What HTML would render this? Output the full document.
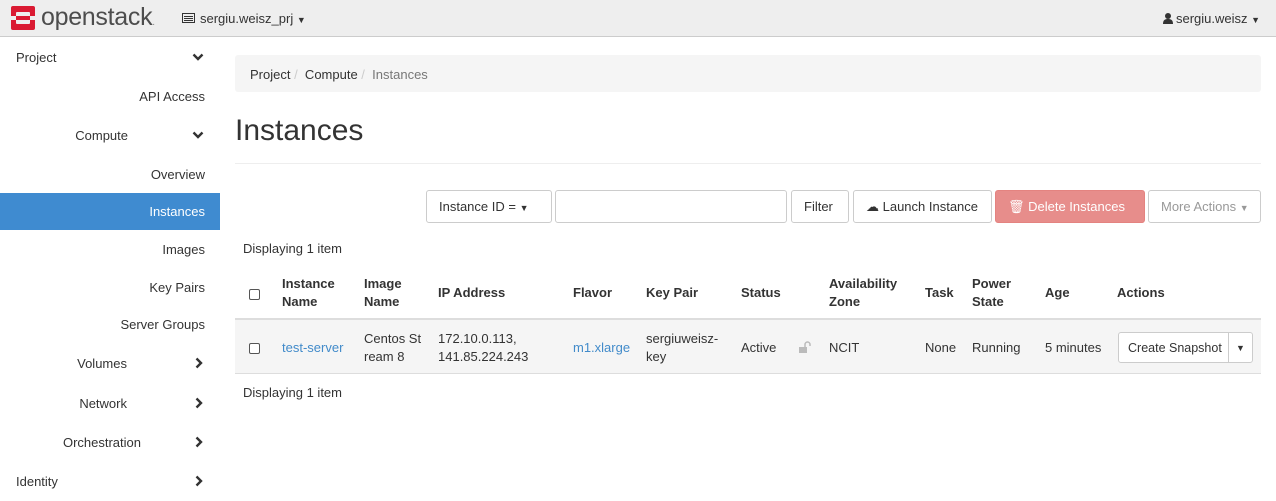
<!DOCTYPE html>
<html><head><meta charset="utf-8"><style>
*{box-sizing:border-box}
body{margin:0;width:1276px;height:493px;overflow:hidden;font-family:"Liberation Sans",sans-serif;font-size:13px;color:#333;background:#fff;position:relative}
.hdr{position:absolute;left:0;top:0;width:1276px;height:37px;background:#eee;border-bottom:1px solid #ccc}
.abs{position:absolute;white-space:nowrap}
.nav{position:absolute;left:0;width:220px;height:37px;line-height:39px;text-align:right;padding-right:15px;white-space:nowrap}
.btn{position:absolute;top:190px;height:33px;border:1px solid #ccc;border-radius:3px;background:#fff;line-height:31px;font-size:13px;padding:0 12px;white-space:nowrap}
.col{position:absolute;white-space:nowrap;line-height:18px}
a{color:#428bca;text-decoration:none}
.cb{position:absolute;left:249px;width:11px;height:11px;border:1px solid #555;border-radius:2px;background:#fff}
.ch{position:absolute}
</style></head><body>
<div class="hdr">
<svg class="abs" style="left:10px;top:5px" width="26" height="26" viewBox="0 0 26 26"><rect x="1" y="1" width="24" height="24" rx="2" fill="#da1a32"/><rect x="6" y="7" width="14" height="12" rx="1" fill="#eee"/><rect x="1" y="11" width="5" height="4" fill="#eee"/><rect x="20" y="11" width="5" height="4" fill="#eee"/><rect x="6" y="11" width="14" height="4" fill="#da1a32"/></svg>
<div class="abs" style="left:41px;top:3px;font-size:25px;color:#4d4d4d;letter-spacing:-0.3px">openstack<span style="font-size:10px;color:#888">.</span></div>
<svg class="abs" style="left:182px;top:13px" width="13" height="10"><rect x="0.5" y="0.5" width="12" height="9" fill="none" stroke="#333"/><rect x="2" y="3" width="9" height="1" fill="#333"/><rect x="2" y="5" width="9" height="1" fill="#333"/><rect x="2" y="7" width="9" height="1" fill="#333"/></svg>
<div class="abs" style="left:200px;top:11px;font-size:13px">sergiu.weisz_prj <span style="font-size:9px">▼</span></div>
<svg class="abs" style="left:1163px;top:13px" width="10" height="11"><circle cx="5" cy="3" r="3" fill="#333"/><path d="M0 11c0-4 2-5 5-5s5 1 5 5z" fill="#333"/></svg>
<div class="abs" style="left:1176px;top:11px;font-size:13px">sergiu.weisz <span style="font-size:9px">▼</span></div>
</div>
<div class="nav" style="top:38px;text-align:left;padding-left:16px">Project</div>
<div class="nav" style="top:77px">API Access</div>
<div class="nav" style="top:116px;padding-right:92px">Compute</div>
<div class="nav" style="top:155px">Overview</div>
<div class="nav" style="top:193px;background:#3f8bd0;color:#fff;line-height:37px">Instances</div>
<div class="nav" style="top:230px">Images</div>
<div class="nav" style="top:268px">Key Pairs</div>
<div class="nav" style="top:305px">Server Groups</div>
<div class="nav" style="top:344px;padding-right:93px">Volumes</div>
<div class="nav" style="top:384px;padding-right:93px">Network</div>
<div class="nav" style="top:423px;padding-right:79px">Orchestration</div>
<div class="nav" style="top:462px;text-align:left;padding-left:16px">Identity</div>
<svg class="ch" style="left:192px;top:53px" width="12" height="8"><polyline points="1.5,1.5 6,6 10.5,1.5" fill="none" stroke="#333" stroke-width="2.4"/></svg>
<svg class="ch" style="left:192px;top:131px" width="12" height="8"><polyline points="1.5,1.5 6,6 10.5,1.5" fill="none" stroke="#333" stroke-width="2.4"/></svg>
<svg class="ch" style="left:195px;top:357px" width="8" height="12"><polyline points="1.5,1.5 6,6 1.5,10.5" fill="none" stroke="#333" stroke-width="2.4"/></svg>
<svg class="ch" style="left:195px;top:397px" width="8" height="12"><polyline points="1.5,1.5 6,6 1.5,10.5" fill="none" stroke="#333" stroke-width="2.4"/></svg>
<svg class="ch" style="left:195px;top:436px" width="8" height="12"><polyline points="1.5,1.5 6,6 1.5,10.5" fill="none" stroke="#333" stroke-width="2.4"/></svg>
<svg class="ch" style="left:195px;top:475px" width="8" height="12"><polyline points="1.5,1.5 6,6 1.5,10.5" fill="none" stroke="#333" stroke-width="2.4"/></svg>
<div class="abs" style="left:235px;top:55px;width:1026px;height:37px;background:#f5f5f5;border-radius:3px;line-height:40px;padding-left:15px">Project <span style="color:#ccc">/</span>&nbsp; Compute <span style="color:#ccc">/</span>&nbsp; <span style="color:#777">Instances</span></div>
<div class="abs" style="left:235px;top:114px;font-size:30px;color:#333">Instances</div>
<div class="abs" style="left:235px;top:163px;width:1026px;height:1px;background:#eee"></div>
<div class="btn" style="left:426px;width:126px">Instance ID = <span style="font-size:9px">▼</span></div>
<div class="btn" style="left:555px;width:232px"></div>
<div class="btn" style="left:791px;width:58px">Filter</div>
<div class="btn" style="left:853px;width:139px">☁︎ Launch Instance</div>
<div class="btn" style="left:995px;width:150px;background:#e78d8b;border-color:#e48380;color:#fff">🗑︎ Delete Instances</div>
<div class="btn" style="left:1148px;width:113px;color:#999">More Actions <span style="font-size:9px">▼</span></div>
<div class="abs" style="left:243px;top:241px">Displaying 1 item</div>
<div class="abs" style="left:235px;top:318px;width:1026px;height:56px;background:#f5f5f5;border-top:2px solid #ddd;border-bottom:1px solid #ddd"></div>
<div class="cb" style="top:289px"></div>
<div class="cb" style="top:343px"></div>
<div style="font-weight:bold">
<div class="col" style="left:282px;top:275px">Instance<br>Name</div>
<div class="col" style="left:364px;top:275px">Image<br>Name</div>
<div class="col" style="left:438px;top:284px">IP Address</div>
<div class="col" style="left:573px;top:284px">Flavor</div>
<div class="col" style="left:646px;top:284px">Key Pair</div>
<div class="col" style="left:741px;top:284px">Status</div>
<div class="col" style="left:829px;top:275px">Availability<br>Zone</div>
<div class="col" style="left:925px;top:284px">Task</div>
<div class="col" style="left:972px;top:275px">Power<br>State</div>
<div class="col" style="left:1045px;top:284px">Age</div>
<div class="col" style="left:1117px;top:284px">Actions</div>
</div>
<div class="col" style="left:282px;top:339px"><a>test-server</a></div>
<div class="col" style="left:364px;top:330px">Centos St<br>ream 8</div>
<div class="col" style="left:438px;top:330px">172.10.0.113,<br>141.85.224.243</div>
<div class="col" style="left:573px;top:339px"><a>m1.xlarge</a></div>
<div class="col" style="left:646px;top:330px">sergiuweisz-<br>key</div>
<div class="col" style="left:741px;top:339px">Active</div>
<svg class="abs" style="left:799px;top:341px" width="12" height="12"><path d="M6 6V3.5a2.5 2.5 0 0 1 5 0V5" fill="none" stroke="#bbb" stroke-width="1.5"/><rect x="0" y="6" width="8" height="6" fill="#bbb"/></svg>
<div class="col" style="left:829px;top:339px">NCIT</div>
<div class="col" style="left:925px;top:339px">None</div>
<div class="col" style="left:972px;top:339px">Running</div>
<div class="col" style="left:1045px;top:339px">5 minutes</div>
<div class="abs" style="left:1118px;top:332px;width:135px;height:31px;border:1px solid #ccc;border-radius:3px;background:#fff"></div>
<div class="abs" style="left:1228px;top:332px;width:1px;height:31px;background:#ccc"></div>
<div class="col" style="left:1128px;top:339px;font-size:12.5px">Create Snapshot</div>
<div class="col" style="left:1236px;top:339px;font-size:9px">▼</div>
<div class="abs" style="left:243px;top:385px">Displaying 1 item</div>
</body></html>
